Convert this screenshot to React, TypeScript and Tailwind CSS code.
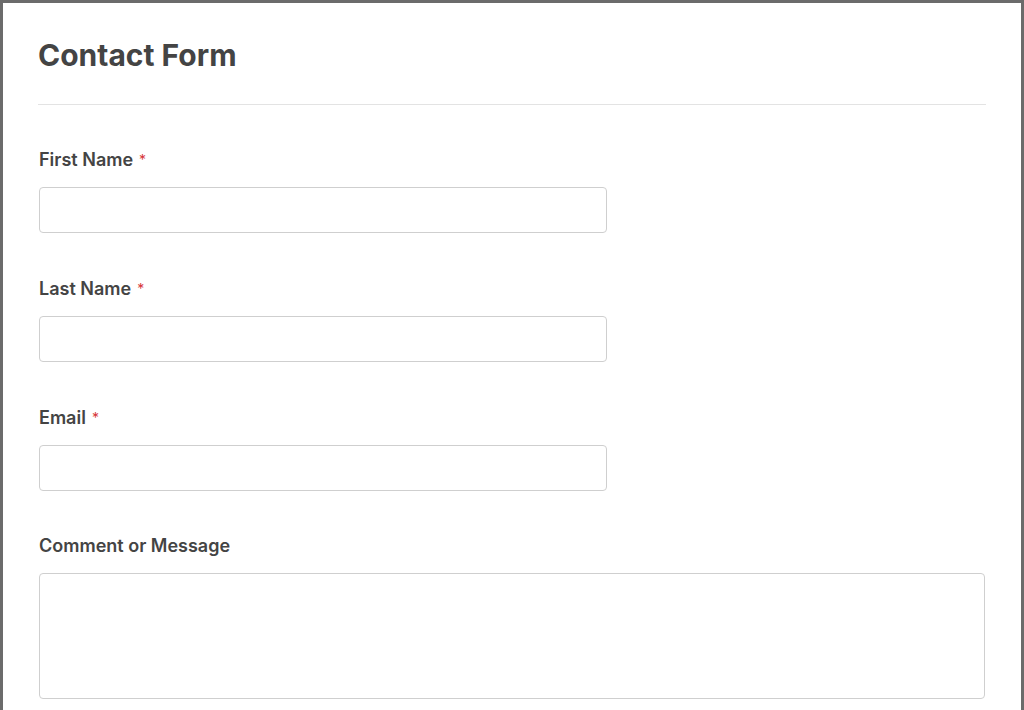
import React from "react";

const fields = [
  { label: "First Name", required: true },
  { label: "Last Name", required: true },
  { label: "Email", required: true },
];

const App = () => {
  return (
    <div
      className="h-[710px] overflow-hidden bg-[#6b6b6b] p-[3px] pb-0"
      style={{ fontFamily: "Inter, 'Noto Sans', sans-serif" }}
    >
      <div className="h-full bg-white px-[35px] pt-[34px]">
        <h1 className="text-[30px] leading-[36px] font-bold text-[#444444]">
          Contact Form
        </h1>
        <hr className="mt-[31px] border-0 border-t border-[#e3e3e3]" />

        <div className="pt-[42px] pl-[1px] pr-[1px]">
          {fields.map((f, i) => (
            <div key={f.label} className={i === 2 ? "mb-[42px]" : "mb-[43px]"}>
              <label className="block pt-[1px] text-[18px] leading-[24px] font-semibold text-[#444444]">
                {f.label}
                {f.required && (
                  <span className="ml-[6px] text-[14px] align-top text-[#d63638] font-normal">*</span>
                )}
              </label>
              <input
                type="text"
                className="mt-[15px] block h-[46px] w-[568px] rounded-[4px] border border-[#cfcfcf] bg-white"
              />
            </div>
          ))}
          <div>
            <label className="block pt-[1px] text-[18px] leading-[24px] font-semibold text-[#444444]">
              Comment or Message
            </label>
            <textarea className="mt-[15px] block h-[126px] w-full resize-none rounded-[4px] border border-[#cfcfcf] bg-white" />
          </div>
        </div>
      </div>
    </div>
  );
};

export default App;
